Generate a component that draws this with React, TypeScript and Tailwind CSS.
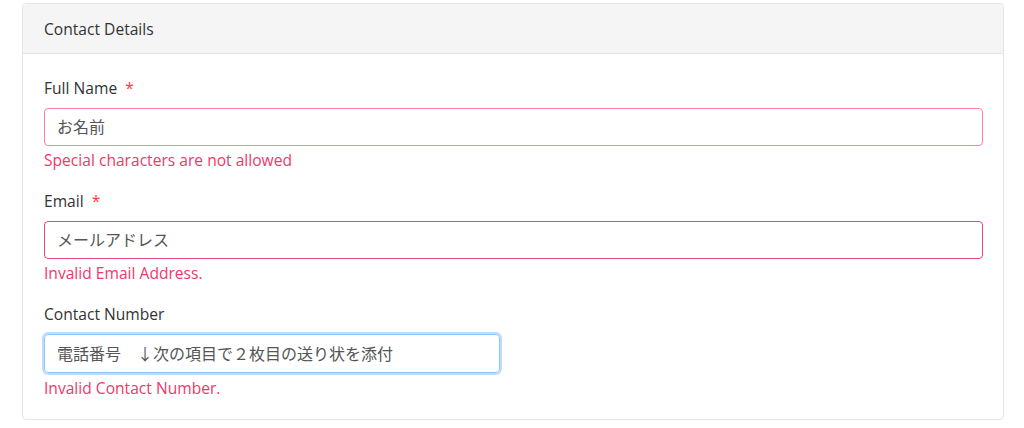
import React from "react";

const font = {
  fontFamily: '"Segoe UI", "Open Sans", "Noto Sans CJK JP", sans-serif',
};

export default function App() {
  return (
    <div className="bg-white w-[1024px] h-[428px] pt-[3px] pl-[22px]" style={font}>
      <div className="w-[982px] border border-[#e5e5e5] rounded-[4px] text-[15.6px] leading-[24px] text-[#333]">
        <div className="h-[50px] bg-[#f5f5f5] border-b border-[#e3e3e3] pl-[21px] pr-5 flex items-center rounded-t-[4px]">
          Contact Details
        </div>
        <div className="pl-[21px] pr-5 pt-[22px] pb-[19px]">
          <div className="mb-[17px]">
            <label className="block mb-2">
              Full Name <span className="text-[#ff3b3b] ml-1">*</span>
            </label>
            <div className="h-[38px] border border-[#f6869f] rounded-[4px] px-3 flex items-center text-[16px] text-[#555]">
              お名前
            </div>
            <div className="mt-[2px] text-[#f0386b]">Special characters are not allowed</div>
          </div>
          <div className="mb-[17px]">
            <label className="block mb-2">
              Email <span className="text-[#ff3b3b] ml-1">*</span>
            </label>
            <div className="h-[38px] border border-[#e8497a] rounded-[4px] px-3 flex items-center text-[16px] text-[#555]">
              メールアドレス
            </div>
            <div className="mt-[2px] text-[#f0386b]">Invalid Email Address.</div>
          </div>
          <div>
            <label className="block mb-2">Contact Number</label>
            <div className="w-[456px] h-[39px] border border-[#90c4ff] rounded-[4px] px-3 flex items-center text-[16px] text-[#555] shadow-[0_0_0_2px_rgba(0,123,255,0.25)]">
              電話番号　↓次の項目で２枚目の送り状を添付
            </div>
            <div className="mt-[3px] text-[#f0386b]">Invalid Contact Number.</div>
          </div>
        </div>
      </div>
    </div>
  );
}
